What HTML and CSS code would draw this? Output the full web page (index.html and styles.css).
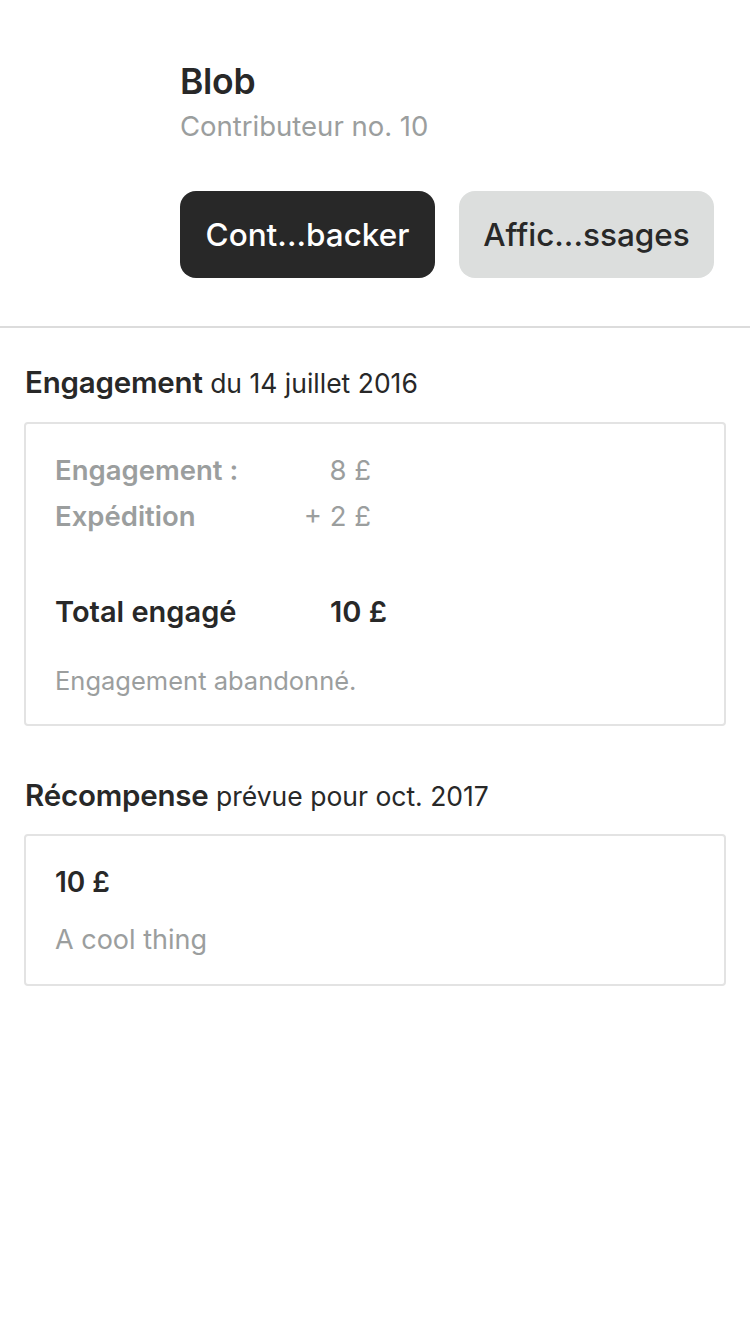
FILE: index.html
```html
<!DOCTYPE html>
<html lang="fr">
<head>
<meta charset="utf-8">
<title>Blob</title>
<link rel="stylesheet" href="styles.css">
</head>
<body>
<div class="page">
  <header class="profile">
    <div class="name">Blob</div>
    <div class="subtitle">Contributeur no. 10</div>
    <div class="actions">
      <button class="btn btn-dark">Cont...backer</button>
      <button class="btn btn-light">Affic...ssages</button>
    </div>
  </header>
  <div class="divider"></div>
  <section class="section">
    <h2 class="section-title"><strong>Engagement</strong> du 14 juillet 2016</h2>
    <div class="card pledge">
      <div class="row muted-row">
        <span class="label">Engagement :</span>
        <span class="value">8 £</span>
      </div>
      <div class="row muted-row">
        <span class="label">Expédition</span>
        <span class="value">+ 2 £</span>
      </div>
      <div class="row total-row">
        <span class="label">Total engagé</span>
        <span class="value">10 £</span>
      </div>
      <div class="note">Engagement abandonné.</div>
    </div>
  </section>
  <section class="section">
    <h2 class="section-title"><strong>Récompense</strong> prévue pour oct. 2017</h2>
    <div class="card reward">
      <div class="reward-amount">10 £</div>
      <div class="reward-desc">A cool thing</div>
    </div>
  </section>
</div>
</body>
</html>
```

FILE: styles.css
```css
* { box-sizing: border-box; }
html, body {
  margin: 0;
  padding: 0;
  background: #ffffff;
}
body {
  font-family: Inter, "Noto Sans", "Liberation Sans", sans-serif;
  color: #282828;
  width: 750px;
}
.page {
  display: flex;
  flex-direction: column;
}
.profile {
  padding: 60px 0 48px 180px;
  display: flex;
  flex-direction: column;
}
.name {
  font-size: 35.5px;
  font-weight: 600;
  line-height: 44px;
  color: #282828;
  letter-spacing: -0.3px;
}
.subtitle {
  font-size: 27.5px;
  line-height: 36px;
  color: #9b9e9e;
  margin-top: 4px;
}
.actions {
  display: flex;
  gap: 24px;
  margin-top: 47px;
}
.btn {
  width: 255px;
  height: 87px;
  border: none;
  border-radius: 16px;
  font-family: inherit;
  font-size: 31.5px;
  font-weight: 500;
  padding: 0;
}
.btn-dark {
  background: #282828;
  color: #ffffff;
}
.btn-light {
  background: #dcdedd;
  color: #282828;
}
.divider {
  height: 2px;
  background: #dcdcdc;
}
.section {
  padding: 0 24px;
  display: flex;
  flex-direction: column;
}
.section-title {
  margin: 37px 0 0 1px;
  font-size: 26.5px;
  font-weight: 400;
  line-height: 34px;
  color: #282828;
}
.section + .section .section-title {
  margin-top: 52px;
}
.section-title strong {
  font-size: 29.5px;
  font-weight: 600;
  letter-spacing: -0.2px;
}
.card {
  margin-top: 22px;
  border: 2px solid #e3e3e3;
  border-radius: 4px;
  padding: 0 29px;
}
.section + .section .card {
  margin-top: 21px;
}
.pledge {
  padding-top: 23px;
  padding-bottom: 26px;
}
.row {
  display: grid;
  grid-template-columns: 226px 90px;
  line-height: 46px;
  font-size: 27.5px;
  white-space: nowrap;
}
.muted-row {
  color: #9b9e9e;
}
.muted-row .label {
  font-weight: 600;
}
.muted-row .value {
  text-align: right;
}
.total-row {
  margin-top: 50px;
  font-weight: 600;
  font-size: 29px;
  color: #282828;
  grid-template-columns: 275px auto;
}
.note {
  margin-top: 29px;
  font-size: 25.5px;
  line-height: 34px;
  color: #9b9e9e;
}
.reward {
  padding-top: 30px;
  padding-bottom: 26px;
}
.reward-amount {
  font-size: 28px;
  font-weight: 600;
  line-height: 32px;
}
.reward-desc {
  margin-top: 24px;
  font-size: 27px;
  line-height: 36px;
  color: #9b9e9e;
}
```
